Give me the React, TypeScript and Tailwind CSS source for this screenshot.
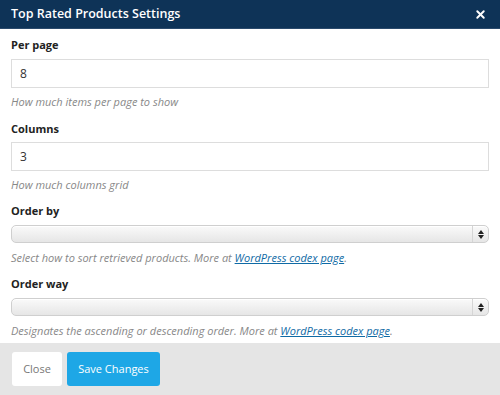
import { X } from 'lucide-react';

const Select = () => (
  <div className="mt-[5px] flex h-[18px] w-full rounded-[5px] border border-[#cfcfcf] bg-gradient-to-b from-[#fafafa] to-[#e6e6e6] shadow-[inset_0_1px_0_#fff]">
    <div className="flex-1" />
    <div className="flex w-[16px] flex-col items-center justify-center gap-[1px] border-l border-[#d5d5d5]">
      <svg width="6" height="4" viewBox="0 0 6 4"><path d="M3 0L6 4H0z" fill="#222" /></svg>
      <svg width="6" height="4" viewBox="0 0 6 4"><path d="M0 0h6L3 4z" fill="#222" /></svg>
    </div>
  </div>
);

const Codex = () => (
  <a href="#" className="text-[#0f6aa5] underline">WordPress codex page</a>
);

export default function App() {
  return (
    <div className="flex h-[395px] w-[500px] flex-col bg-white font-['Open_Sans',sans-serif]">
      <div className="flex h-[29px] items-center justify-between border-b border-[#2a4a6c] bg-[#0e3357] pl-[11px] pr-[13px]">
        <h1 className="text-[12.5px] font-semibold text-white">Top Rated Products Settings</h1>
        <X className="h-[13px] w-[13px] text-white" strokeWidth={3.5} />
      </div>
      <div className="flex-1 px-[11px] pt-[7px]">
        <label className="block text-[11px] font-bold leading-[18px] text-[#222]">Per page</label>
        <div className="mt-[5px] flex h-[29px] items-center border border-[#dddddd] px-[8px] text-[12px] text-[#333]">8</div>
        <p className="mt-[6px] text-[11px] italic leading-[16px] text-[#888]">How much items per page to show</p>

        <label className="mt-[10px] block text-[11px] font-bold leading-[18px] text-[#222]">Columns</label>
        <div className="mt-[4px] flex h-[29px] items-center border border-[#dddddd] px-[8px] text-[12px] text-[#333]">3</div>
        <p className="mt-[6px] text-[11px] italic leading-[16px] text-[#888]">How much columns grid</p>

        <label className="mt-[9px] block text-[11px] font-bold leading-[18px] text-[#222]">Order by</label>
        <Select />
        <p className="mt-[7px] text-[11px] italic leading-[16px] text-[#888]">
          Select how to sort retrieved products. More at <Codex />.
        </p>

        <label className="mt-[9px] block text-[11px] font-bold leading-[18px] text-[#222]">Order way</label>
        <Select />
        <p className="mt-[7px] text-[11px] italic leading-[16px] text-[#888]">
          Designates the ascending or descending order. More at <Codex />.
        </p>
      </div>
      <div className="flex h-[52px] items-center gap-[5px] bg-[#e5e5e5] px-[12px]">
        <button className="h-[34px] w-[50px] rounded-[3px] bg-white text-[11px] text-[#777]">Close</button>
        <button className="h-[34px] w-[93px] rounded-[3px] bg-[#1ea7e6] text-[11px] text-white">Save Changes</button>
      </div>
    </div>
  );
}
